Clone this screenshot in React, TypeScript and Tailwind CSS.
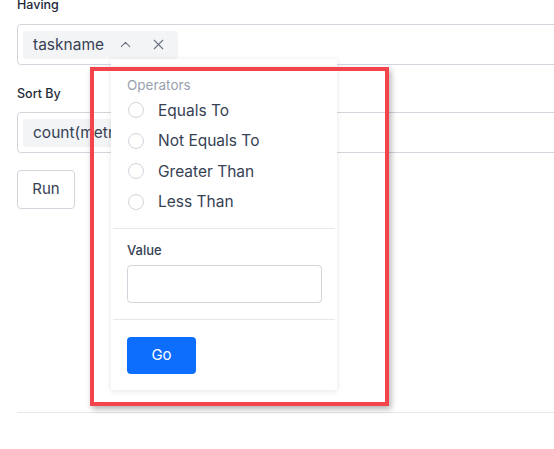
import { ChevronUp, X } from "lucide-react";

const operators = ["Equals To", "Not Equals To", "Greater Than", "Less Than"];

function OperatorPopover() {
  return (
    <div className="absolute left-[111px] top-[59px] w-[226px] h-[331px] bg-white shadow-[0_1px_6px_rgba(0,0,0,0.1)]">
      <div className="px-4 pt-[18px] pb-[11px]">
        <div className="text-[13.5px] leading-4 text-gray-400">Operators</div>
        <div className="mt-[2px] flex flex-col">
          {operators.map((op) => (
            <label key={op} className="flex items-center h-[30.5px]">
              <span className="ml-[1px] w-4 h-4 rounded-full border border-gray-300 bg-white" />
              <span className="ml-[14px] text-[15.5px] text-gray-700">{op}</span>
            </label>
          ))}
        </div>
      </div>
      <div className="mx-[2px] border-t border-gray-200" />
      <div className="px-4 pt-[13px] pb-4">
        <div className="text-[13px] leading-4 font-medium text-gray-700">Value</div>
        <input className="mt-[7px] block w-[195px] h-[38px] rounded border border-gray-300 bg-white" />
      </div>
      <div className="mx-[2px] border-t border-gray-200" />
      <div className="px-4 pt-[17px]">
        <button className="w-[69px] h-[37px] rounded bg-[#0d6efd] text-white text-[15px]">Go</button>
      </div>
    </div>
  );
}

export default function App() {
  return (
    <div
      className="relative w-[554px] h-[449px] overflow-hidden bg-white"
      style={{ fontFamily: "Inter, 'Noto Sans', sans-serif" }}
    >
      <div className="pl-[17px] -mt-[3px]">
        <div className="text-[12.5px] leading-4 font-medium text-gray-800">Having</div>
        <div className="mt-[11px] w-[600px] h-[41px] rounded border border-gray-300 flex items-center px-[5px]">
          <div className="flex items-center h-[28px] w-[155px] rounded bg-gray-100 pl-[10px] text-[15.5px] text-gray-700">
            taskname
            <ChevronUp className="ml-[13px] w-[17px] h-[17px] text-gray-500" strokeWidth={1.5} />
            <X className="ml-[16px] w-[17px] h-[17px] text-gray-500" strokeWidth={1.5} />
          </div>
        </div>
        <div className="mt-[21px] text-[12.5px] leading-4 font-medium text-gray-800">Sort By</div>
        <div className="mt-[10px] w-[600px] h-[41px] rounded border border-gray-300 flex items-center px-[5px]">
          <div className="flex items-center h-[28px] w-[200px] rounded bg-gray-100 pl-[10px] text-[15.5px] text-gray-700">
            count(metric)
          </div>
        </div>
        <button className="mt-[17px] w-[58px] h-[39px] rounded border border-gray-300 bg-white text-[15px] text-gray-700">
          Run
        </button>
        <div className="mt-[203px] border-t border-gray-200" />
      </div>

      <OperatorPopover />

      <div className="absolute left-[90px] top-[67px] w-[299px] h-[339px] border-4 border-[#f2444a] shadow-[2px_3px_6px_rgba(0,0,0,0.3)]" />
    </div>
  );
}
